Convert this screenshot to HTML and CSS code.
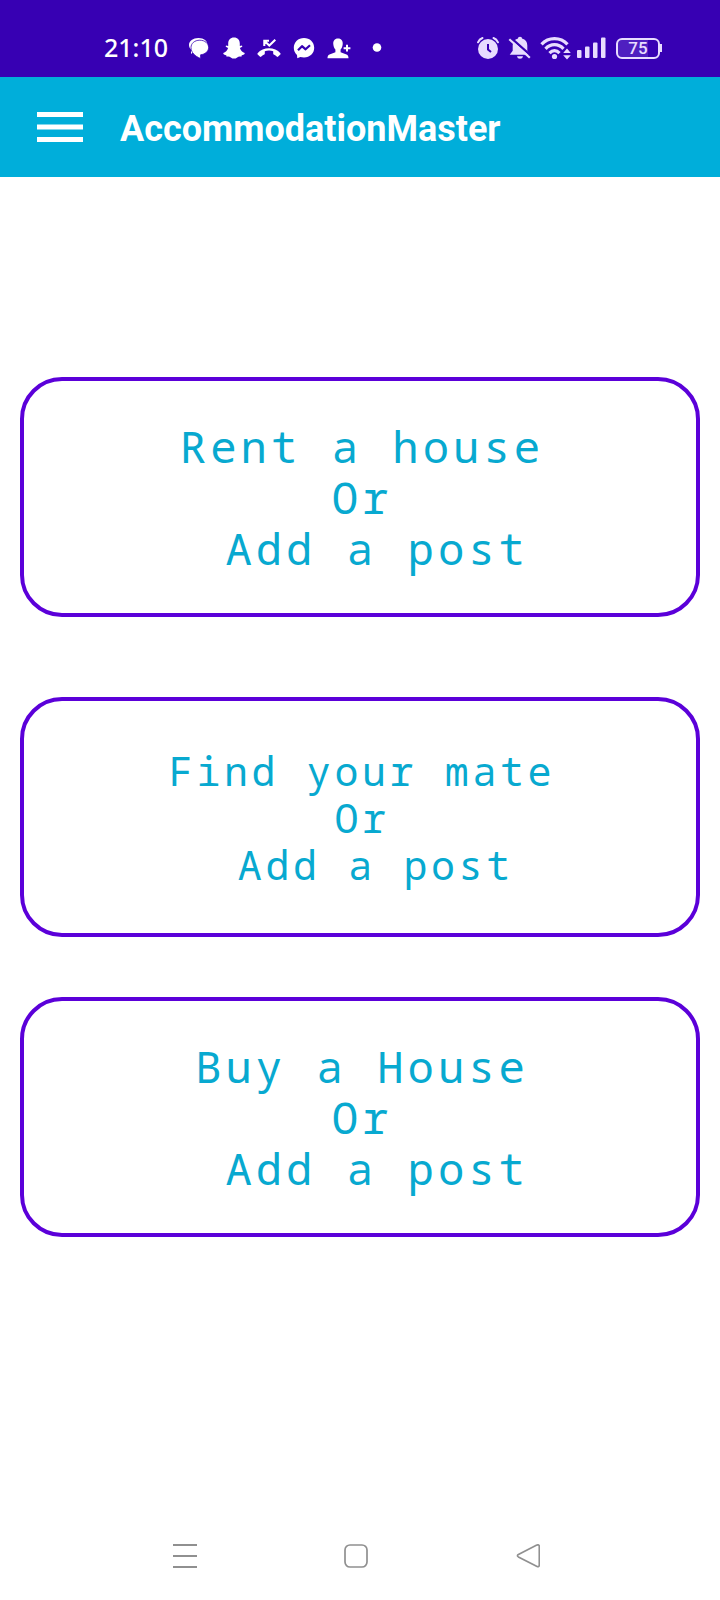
FILE: index.html
```html
<!DOCTYPE html>
<html lang="en">
<head>
<meta charset="utf-8">
<meta name="viewport" content="width=device-width, initial-scale=1">
<title>AccommodationMaster</title>
<link rel="stylesheet" href="styles.css">
</head>
<body>
<div class="status-bar">
  <div class="status-left">
    <time class="clock">21:10</time>
    <div class="notifications">
      <svg class="icon" viewBox="0 0 24 24" aria-hidden="true"><path d="M11.500 2C17 2 20.500 5 20.500 9C20.500 13 17 16 12.500 16H6.500L4 18V13.500C2.800 12.300 2 10.800 2 9C2 5 6 2 11.500 2Z" fill="#fff"/><path d="M12.800 4.200C18 4.200 21.600 7.500 21.600 11.500C21.600 15.300 18.300 18.200 13.600 18.800V22.500C8 20.300 4 16.500 4 11.500C4 7.500 7.500 4.200 12.800 4.200Z" fill="#fff" stroke="#3700b3" stroke-width=".8"/></svg>
      <svg class="icon" viewBox="0 0 24 24" aria-hidden="true"><path d="M12 1.500C15.700 1.500 17.800 4 17.800 7.500V10L20 9.500L20.300 10.800L17.900 12C18.700 14.600 20.500 16.200 22.700 16.900C23 18.400 21.300 18.900 19.800 19.200L19.300 20.800C17.800 20.400 16.400 20.500 15.200 21.400C13.200 23 10.800 23 8.800 21.400C7.600 20.500 6.200 20.400 4.700 20.800L4.200 19.200C2.700 18.900 1 18.400 1.300 16.900C3.500 16.200 5.300 14.600 6.100 12L3.700 10.800L4 9.500L6.200 10V7.500C6.200 4 8.300 1.500 12 1.500Z" fill="#fff"/></svg>
      <svg class="icon" viewBox="0 0 24 24" aria-hidden="true"><path d="M7.300 10V4.800H12M7.500 5L12.300 9.500L18.300 3.800" fill="none" stroke="#fff" stroke-width="2.100"/><path d="M.6 17.300C6 10.500 18 10.500 23.400 17.300C23.800 17.800 23.700 18.200 23.300 18.600L21.200 20.600C20.700 21 20.200 21 19.700 20.600C18.700 19.700 17.600 19 16.800 18.600C16.300 18.300 16.200 18 16.200 17.400V15.200C13.500 14.400 10.500 14.400 7.800 15.200V17.400C7.800 18 7.700 18.300 7.200 18.600C6.400 19 5.300 19.700 4.300 20.600C3.800 21 3.300 21 2.800 20.600L.7 18.600C.3 18.200 .2 17.800 .6 17.300Z" fill="#fff"/></svg>
      <svg class="icon" viewBox="0 0 24 24" aria-hidden="true"><path d="M12 2C6.200 2 1.800 6.200 1.800 11.800C1.800 14.800 3 17.300 5 19.100L5.300 22.300L8.300 20.900C9.500 21.200 10.700 21.400 12 21.400C17.800 21.400 22.200 17.300 22.200 11.700C22.200 6.200 17.800 2 12 2Z" fill="#fff"/><path d="M6 14.300L10 10.200L13.600 13.300L18 9.300" fill="none" stroke="#3700b3" stroke-width="2.200" stroke-linejoin="round"/></svg>
      <svg class="icon" viewBox="0 0 24 24" aria-hidden="true"><path d="M11 2.500C14.500 2.500 16 5 15.700 8.300C15.500 10.600 14.800 12.200 13.600 13.600V16.300L19.500 18.600C21 19.200 21.500 20.500 21.500 22.300H.5C.5 20.500 1 19.200 2.500 18.600L8.400 16.300V13.600C7.200 12.200 6.500 10.600 6.300 8.300C6 5 7.500 2.500 11 2.500Z" fill="#fff"/><path d="M20 8.800V15.600M16.600 12.200H23.400" fill="none" stroke="#fff" stroke-width="2"/></svg>
      <svg class="icon more" viewBox="0 0 30 24" aria-hidden="true"><circle cx="15" cy="11.500" r="4.300" fill="#fff"/></svg>
    </div>
  </div>
  <div class="system">
    <svg class="icon" viewBox="0 0 24 24" aria-hidden="true"><circle cx="12" cy="13" r="10" fill="#e8dcff"/><path d="M2 6.300C3 4 4.500 2.700 6.500 2M22 6.300C21 4 19.500 2.700 17.500 2" fill="none" stroke="#e8dcff" stroke-width="2" stroke-linecap="round"/><path d="M12 8V13.500L15 16" fill="none" stroke="#3700b3" stroke-width="2"/></svg>
    <svg class="icon" viewBox="0 0 24 24" aria-hidden="true"><path d="M12 .8C13.400 .8 14 1.500 14 2.600C17.600 3.400 19.300 6.200 19.300 9.500V14.700L22.300 18.800H1.700L4.700 14.700V9.500C4.700 6.200 6.400 3.400 10 2.600C10 1.500 10.600 .8 12 .8ZM9 20.300H15C14.700 22 13.600 22.800 12 22.800C10.400 22.800 9.300 22 9 20.300Z" fill="#e8dcff"/><path d="M2.600 1.700L23.600 20.200" stroke="#3700b3" stroke-width="2.400"/><path d="M1.300 3.200L21.800 21.800" stroke="#e8dcff" stroke-width="2.200"/></svg>
    <svg class="icon wifi" viewBox="0 0 32 24" aria-hidden="true"><g fill="none" stroke="#e8dcff" stroke-width="3.200"><path d="M1.500 8.300C8.500 .8 20.500 .8 27.500 8.300"/><path d="M5.500 12.800C10.500 7.300 18.500 7.300 23.500 12.800"/><path d="M9.500 17.100C12.500 13.900 16.500 13.900 19.500 17.100"/></g><circle cx="14.500" cy="20.500" r="2.600" fill="#e8dcff"/><path d="M27 12.600L30.800 17H23.200ZM27 23.600L30.800 19.200H23.200Z" fill="#e8dcff"/></svg>
    <svg class="icon signal" viewBox="0 0 30 24" aria-hidden="true"><g fill="#e8dcff"><rect x="1" y="14" width="4.500" height="8" rx="1"/><rect x="9" y="10.500" width="4.500" height="11.500" rx="1"/><rect x="17" y="6.500" width="4.500" height="15.500" rx="1"/><rect x="25" y="1.500" width="4.500" height="20.500" rx="1"/></g></svg>
    <div class="battery"><span class="battery-level">75</span></div>
  </div>
</div>

<header class="app-bar">
  <button class="menu-button" type="button" aria-label="Open menu">
    <svg class="menu-icon" viewBox="0 0 46 32" aria-hidden="true"><path d="M0 3.500H46M0 16H46M0 28.500H46" stroke="#fff" stroke-width="5"/></svg>
  </button>
  <h1 class="title">AccommodationMaster</h1>
</header>

<main class="options">
  <button class="option" type="button">Rent a house
Or
 Add a post</button>
  <button class="option option-mate" type="button">Find your mate
Or
 Add a post</button>
  <button class="option" type="button">Buy a House
Or
 Add a post</button>
</main>

<nav class="nav-bar" aria-label="System navigation">
  <button class="nav-button" type="button" aria-label="Recent apps"><svg class="icon" viewBox="0 0 24 24" aria-hidden="true"><path d="M0 1H24M0 12H24M0 23H24" stroke="#909090" stroke-width="1.800"/></svg></button>
  <button class="nav-button" type="button" aria-label="Home"><svg class="icon" viewBox="0 0 24 24" aria-hidden="true"><rect x="1" y="1" width="22" height="22" rx="5" fill="none" stroke="#909090" stroke-width="1.700"/></svg></button>
  <button class="nav-button" type="button" aria-label="Back"><svg class="icon" viewBox="0 0 24 24" aria-hidden="true"><path d="M2.400 10.600L20.300 1.200Q23.300 0 23.300 2.600V20.900Q23.300 23.500 20.600 22.200L2.400 12.900Q.5 11.700 2.400 10.600Z" fill="none" stroke="#909090" stroke-width="1.700"/></svg></button>
</nav>
</body>
</html>
```

FILE: styles.css
```css
* {
  box-sizing: border-box;
}

body {
  margin: 0;
  min-height: 100vh;
  display: flex;
  flex-direction: column;
  background: #fff;
  font-family: Roboto, "Liberation Sans", sans-serif;
}

button {
  margin: 0;
  padding: 0;
  border: 0;
  background: none;
  cursor: pointer;
}

.icon {
  display: block;
  flex: none;
  width: 24px;
  height: 24px;
}

.status-bar {
  display: flex;
  align-items: center;
  justify-content: space-between;
  min-height: 77px;
  padding: 19px 58px 0 104px;
  background: #3700b3;
}

.status-left {
  display: flex;
  align-items: center;
  gap: 19px;
}

.clock {
  padding-bottom: 2px;
  color: #fff;
  font-family: "Noto Sans", sans-serif;
  font-size: 25px;
  font-weight: 500;
  line-height: 32px;
}

.notifications {
  display: flex;
  gap: 11px;
}

.more {
  width: 30px;
}

.system {
  display: flex;
  align-items: center;
  gap: 8px;
}

.wifi {
  width: 32px;
}

.signal {
  width: 30px;
  margin-left: -4px;
}

.battery {
  display: flex;
  align-items: center;
  margin-left: 2px;
}

.battery-level {
  width: 44px;
  border: 2px solid #e8dcff;
  border-radius: 6px;
  background: linear-gradient(to right, #4f1fc0 75%, #3700b3 75%);
  color: #e8dcff;
  font-size: 17px;
  font-weight: 500;
  line-height: 17px;
  text-align: center;
}

.battery::after {
  content: "";
  width: 2px;
  height: 8px;
  background: #e8dcff;
}

.app-bar {
  display: flex;
  align-items: center;
  gap: 37px;
  min-height: 100px;
  padding: 0 37px;
  background: #00aeda;
}

.menu-icon {
  display: block;
  width: 46px;
  height: 32px;
}

.title {
  margin: 0;
  padding-top: 4px;
  color: #fff;
  font-size: 36px;
  font-weight: 700;
  line-height: 44px;
}

.options {
  flex: 1;
  display: flex;
  flex-direction: column;
  gap: 60px;
  padding: 200px 20px 60px;
}

.option {
  min-height: 240px;
  padding: 0 16px 0 20px;
  border: 4px solid #5b00d9;
  border-radius: 42px;
  color: #08a9d0;
  font-family: "Noto Sans Mono", "DejaVu Sans Mono", monospace;
  font-size: 44px;
  line-height: 51px;
  letter-spacing: 0.09em;
  text-align: center;
  white-space: pre-wrap;
}

.option-mate {
  margin-top: 20px;
  font-size: 40px;
  line-height: 47px;
}

.nav-bar {
  display: flex;
  justify-content: space-between;
  padding: 32px 25% 32px 24%;
}
```
